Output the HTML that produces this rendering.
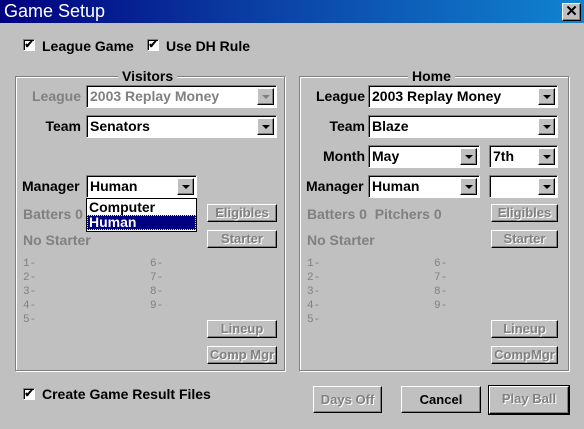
<!DOCTYPE html>
<html><head><style>
*{margin:0;padding:0;box-sizing:border-box}
body{width:584px;height:429px;background:#c0c0c0;position:relative;overflow:hidden;font-family:"Liberation Sans",sans-serif;font-weight:bold;font-size:13px;color:#000}
.a{position:absolute;white-space:nowrap}
.title{left:0;top:0;width:584px;height:23px;background:linear-gradient(90deg,#000080 0%,#0a3aa0 40%,#1084d0 100%);color:#fff;font-weight:normal;font-size:18px;padding:0 0 0 4px;line-height:22px}
.close{left:562px;top:3px;width:19px;height:18px;background:#c0c0c0;border:1px solid;border-color:#fff #000 #000 #fff;box-shadow:inset -1px -1px #808080;font-size:15px;text-align:center;line-height:15px}
.cb{width:12px;height:12px;background:#fff;border:1px solid;border-color:#808080 #fff #fff #808080;box-shadow:inset 1px 1px #000;font-size:11px;line-height:10px;text-align:center}
.grp{border:1px solid #808080;box-shadow:1px 1px #fff,inset 1px 1px #fff}
.gt{background:#c0c0c0;padding:0 4px;font-size:14px}
.combo{height:23px;background:#fff;border:1px solid;border-color:#808080 #fff #fff #808080;box-shadow:inset 1px 1px #000;padding:2px 0 0 3px;font-size:14px}
.combo .btn{position:absolute;right:2px;top:2px;width:17px;height:17px;background:#c0c0c0;border:1px solid;border-color:#fff #000 #000 #fff;box-shadow:inset -1px -1px #808080}
.combo .btn:after{content:"";position:absolute;left:4px;top:6px;border-left:4px solid transparent;border-right:4px solid transparent;border-top:4px solid #000}
.combo .btn.d:after{border-top-color:#808080}
.dis{color:#808080}
.lbl{text-align:right;font-size:14px}
.clip{overflow:hidden;direction:rtl;text-align:left}
.pb{background:#c0c0c0;border:1px solid;border-color:#fff #000 #000 #fff;box-shadow:inset -1px -1px #808080;color:#808080;text-align:center;font-size:13px;text-shadow:1px 1px #fff}
.pb.en{color:#000;text-shadow:none}
.num{font-family:"Liberation Mono",monospace;font-weight:normal;font-size:11px;color:#808080}
</style></head><body>
<div class="a title">Game Setup</div>
<div class="a close">✕</div>

<div class="a cb" style="left:23px;top:39px">✔</div><div class="a" style="left:42px;top:38px;font-size:14px">League Game</div>
<div class="a cb" style="left:147px;top:39px">✔</div><div class="a" style="left:166px;top:38px;font-size:14px">Use DH Rule</div>

<div class="a grp" style="left:15px;top:76px;width:270px;height:295px"></div>
<div class="a gt" style="left:118px;top:68px">Visitors</div>
<div class="a grp" style="left:299px;top:76px;width:270px;height:295px"></div>
<div class="a gt" style="left:408px;top:68px">Home</div>

<!-- visitors -->
<div class="a lbl dis" style="left:20px;top:88px;width:61px">League</div>
<div class="a combo dis" style="left:86px;top:85px;width:191px">2003 Replay Money<div class="btn d"></div></div>
<div class="a lbl" style="left:20px;top:118px;width:61px">Team</div>
<div class="a combo" style="left:86px;top:115px;width:191px">Senators<div class="btn"></div></div>
<div class="a lbl clip" style="left:22px;top:178px;width:59px">Manager</div>
<div class="a dis" style="left:23px;top:206px;font-size:14px">Batters 0</div>
<div class="a dis" style="left:23px;top:232px;font-size:14px">No Starter</div>
<div class="a combo" style="left:86px;top:175px;width:111px">Human<div class="btn"></div></div>
<div class="a" style="left:86px;top:198px;width:111px;height:34px;background:#fff;border:1px solid #000;font-size:14px">
 <div style="padding-left:2px;height:16px;line-height:16px">Computer</div>
 <div style="background:#000080;color:#fff;padding-left:2px;height:15px;line-height:15px;outline:1px dotted #ff0;outline-offset:-1px">Human</div>
</div>
<div class="a pb" style="left:207px;top:204px;width:70px;height:18px">Eligibles</div>
<div class="a pb" style="left:207px;top:230px;width:70px;height:18px">Starter</div>
<div class="a num" style="left:23px;top:257px;line-height:14px">1-<br>2-<br>3-<br>4-<br>5-</div>
<div class="a num" style="left:150px;top:257px;line-height:14px">6-<br>7-<br>8-<br>9-</div>
<div class="a pb" style="left:207px;top:320px;width:70px;height:18px">Lineup</div>
<div class="a pb" style="left:207px;top:346px;width:70px;height:18px">Comp Mgr</div>

<!-- home -->
<div class="a lbl" style="left:300px;top:88px;width:65px">League</div>
<div class="a combo" style="left:368px;top:85px;width:190px">2003 Replay Money<div class="btn"></div></div>
<div class="a lbl" style="left:300px;top:118px;width:65px">Team</div>
<div class="a combo" style="left:368px;top:115px;width:190px">Blaze<div class="btn"></div></div>
<div class="a lbl" style="left:300px;top:148px;width:65px">Month</div>
<div class="a combo" style="left:368px;top:145px;width:112px">May<div class="btn"></div></div>
<div class="a combo" style="left:489px;top:145px;width:69px">7th<div class="btn"></div></div>
<div class="a lbl clip" style="left:306px;top:178px;width:59px">Manager</div>
<div class="a combo" style="left:368px;top:175px;width:112px">Human<div class="btn"></div></div>
<div class="a combo" style="left:489px;top:175px;width:69px"><div class="btn"></div></div>
<div class="a dis" style="left:307px;top:206px;font-size:14px">Batters 0&nbsp; Pitchers 0</div>
<div class="a dis" style="left:307px;top:232px;font-size:14px">No Starter</div>
<div class="a pb" style="left:491px;top:204px;width:67px;height:18px">Eligibles</div>
<div class="a pb" style="left:491px;top:230px;width:67px;height:18px">Starter</div>
<div class="a num" style="left:307px;top:257px;line-height:14px">1-<br>2-<br>3-<br>4-<br>5-</div>
<div class="a num" style="left:434px;top:257px;line-height:14px">6-<br>7-<br>8-<br>9-</div>
<div class="a pb" style="left:491px;top:320px;width:67px;height:18px">Lineup</div>
<div class="a pb" style="left:491px;top:346px;width:67px;height:18px">CompMgr</div>

<div class="a cb" style="left:23px;top:388px">✔</div><div class="a" style="left:42px;top:386px;font-size:14px">Create Game Result Files</div>
<div class="a pb" style="left:313px;top:386px;width:69px;height:27px;line-height:25px">Days Off</div>
<div class="a pb en" style="left:401px;top:386px;width:80px;height:27px;line-height:25px">Cancel</div>
<div class="a pb" style="left:489px;top:386px;width:80px;height:28px;line-height:24px;outline:1px solid #000">Play Ball</div>
</body></html>
